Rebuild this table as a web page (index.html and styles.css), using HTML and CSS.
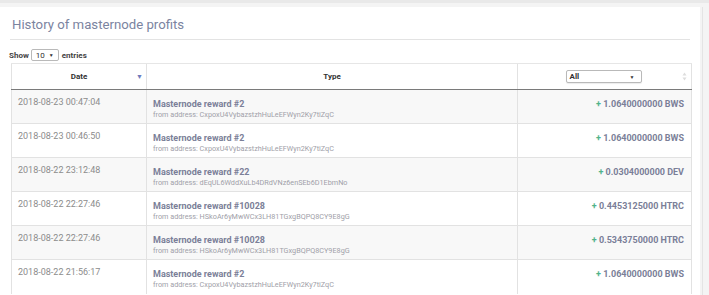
FILE: index.html
```html
<!DOCTYPE html>
<html>
<head>
<meta charset="utf-8">
<link rel="stylesheet" href="styles.css">
</head>
<body>
<div class="topbar"></div>
<div class="layout">
  <div class="card">
    <div class="card-header">
      <h2 class="title">History of masternode profits</h2>
    </div>
    <div class="length">
      <span>Show</span>
      <span class="select small"><span>10</span><span class="caret">▼</span></span>
      <span>entries</span>
    </div>
    <table class="grid">
      <colgroup>
        <col class="c-date"><col class="c-type"><col class="c-amt">
      </colgroup>
      <thead>
        <tr>
          <th class="th-date">Date<span class="sort-desc">▼</span></th>
          <th>Type</th>
          <th class="th-amt"><span class="select wide"><span>All</span><span class="caret">▼</span></span><span class="sort-both"><svg width="5" height="9" viewBox="0 0 5 9"><path d="M2.5 0.5 L4.5 3.5 L0.5 3.5 Z" fill="#ddd"/><path d="M2.5 8.5 L4.5 5.5 L0.5 5.5 Z" fill="#ddd"/></svg></span></th>
        </tr>
      </thead>
      <tbody>
        <tr class="odd">
          <td class="date">2018-08-23 00:47:04</td>
          <td class="type"><div class="name">Masternode reward #2</div><div class="from">from address: CxpoxU4VybazstzhHuLeEFWyn2Ky7tiZqC</div></td>
          <td class="amt"><span class="plus">+</span> 1.0640000000 BWS</td>
        </tr>
        <tr>
          <td class="date">2018-08-23 00:46:50</td>
          <td class="type"><div class="name">Masternode reward #2</div><div class="from">from address: CxpoxU4VybazstzhHuLeEFWyn2Ky7tiZqC</div></td>
          <td class="amt"><span class="plus">+</span> 1.0640000000 BWS</td>
        </tr>
        <tr class="odd">
          <td class="date">2018-08-22 23:12:48</td>
          <td class="type"><div class="name">Masternode reward #22</div><div class="from">from address: dEqUL6WddXuLb4DRdVNz6enSEb6D1EbmNo</div></td>
          <td class="amt"><span class="plus">+</span> 0.0304000000 DEV</td>
        </tr>
        <tr>
          <td class="date">2018-08-22 22:27:46</td>
          <td class="type"><div class="name">Masternode reward #10028</div><div class="from">from address: HSkoAr6yMwWCx3LH81TGxgBQPQ8CY9E8gG</div></td>
          <td class="amt"><span class="plus">+</span> 0.4453125000 HTRC</td>
        </tr>
        <tr class="odd">
          <td class="date">2018-08-22 22:27:46</td>
          <td class="type"><div class="name">Masternode reward #10028</div><div class="from">from address: HSkoAr6yMwWCx3LH81TGxgBQPQ8CY9E8gG</div></td>
          <td class="amt"><span class="plus">+</span> 0.5343750000 HTRC</td>
        </tr>
        <tr>
          <td class="date">2018-08-22 21:56:17</td>
          <td class="type"><div class="name">Masternode reward #2</div><div class="from">from address: CxpoxU4VybazstzhHuLeEFWyn2Ky7tiZqC</div></td>
          <td class="amt"><span class="plus">+</span> 1.0640000000 BWS</td>
        </tr>
      </tbody>
    </table>
  </div>
  <div class="gutter"></div>
</div>
</body>
</html>
```

FILE: styles.css
```css
html, body {
  margin: 0;
  padding: 0;
}
body {
  background: #f4f4f4;
  font-family: Roboto, "Liberation Sans", sans-serif;
  overflow: hidden;
  height: 295px;
}
.topbar {
  height: 3px;
  background: #e9e9e9;
  margin-bottom: 4px;
}
.layout {
  display: flex;
}
.card {
  width: 702px;
  background: #fff;
  height: 300px;
}
.gutter {
  width: 7px;
  box-sizing: border-box;
  border-left: 1px solid #e4e4e4;
  margin-left: 2px;
}
.card-header {
  margin: 0 10px;
  border-bottom: 1px solid #e3e3e3;
  height: 33px;
  box-sizing: border-box;
  padding-top: 4px;
}
.title {
  margin: 0;
  padding-left: 2px;
  font-size: 13.2px;
  font-weight: 400;
  line-height: 28px;
  color: #7b849f;
}
.length {
  display: flex;
  align-items: center;
  gap: 3px;
  margin: 9px 0 0 9px;
  height: 12px;
  font-size: 8px;
  font-weight: 700;
  color: #444;
}
.select {
  display: inline-flex;
  align-items: center;
  justify-content: space-between;
  box-sizing: border-box;
  background: #fff;
  border: 1px solid #b9b9b9;
  border-radius: 2px;
  font-size: 8px;
  font-weight: 700;
  color: #333;
}
.select .caret {
  font-size: 5px;
  color: #333;
}
.select.small {
  width: 28px;
  height: 12px;
  padding: 0 4px 0 4px;
  margin-left: -1px;
  font-weight: 400;
}
.select.wide {
  width: 76px;
  height: 13px;
  padding: 0 6px 0 3px;
  font-weight: 700;
  box-shadow: 0 1px 1px rgba(0,0,0,0.08);
}
.grid {
  margin: 2px 0 0 11px;
  width: 680px;
  table-layout: fixed;
  border-collapse: collapse;
  border-left: 1px solid #e2e2e2;
  border-right: 1px solid #e2e2e2;
}
.c-date { width: 135px; }
.c-type { width: 371px; }
.c-amt { width: 174px; }
th {
  height: 25px;
  padding: 0;
  border-top: 1px solid #e6e6e6;
  border-bottom: 1px solid #7a7a7a;
  border-left: 1px solid #e2e2e2;
  font-size: 8px;
  font-weight: 700;
  color: #333;
  text-align: center;
  position: relative;
}
.th-date .sort-desc {
  position: absolute;
  right: 3px;
  top: 9px;
  font-size: 7px;
  color: #6f7bbd;
}
.th-amt .select {
  margin-left: -2px;
}
.sort-both {
  position: absolute;
  right: 4px;
  top: 8px;
  line-height: 0;
}
td {
  height: 33px;
  padding: 0;
  border-top: 1px solid #e2e2e2;
  border-left: 1px solid #e2e2e2;
  vertical-align: top;
  box-sizing: border-box;
}
tbody tr {
  height: 34px;
}
tbody tr.odd td {
  background: #f8f8f8;
}
.date {
  padding: 6px 0 0 6px;
  font-size: 9px;
  color: #8c8c8c;
  line-height: 12px;
}
.type {
  padding: 9px 0 0 6px;
}
.name {
  font-size: 9px;
  font-weight: 700;
  color: #7b7f98;
  line-height: 11px;
}
.from {
  font-size: 7.25px;
  color: #a0a0a8;
  line-height: 9px;
}
.amt {
  padding: 9px 7px 0 0;
  text-align: right;
  font-size: 9px;
  font-weight: 700;
  color: #7b7f98;
  line-height: 11px;
}
.plus {
  color: #4fb38a;
}
```
